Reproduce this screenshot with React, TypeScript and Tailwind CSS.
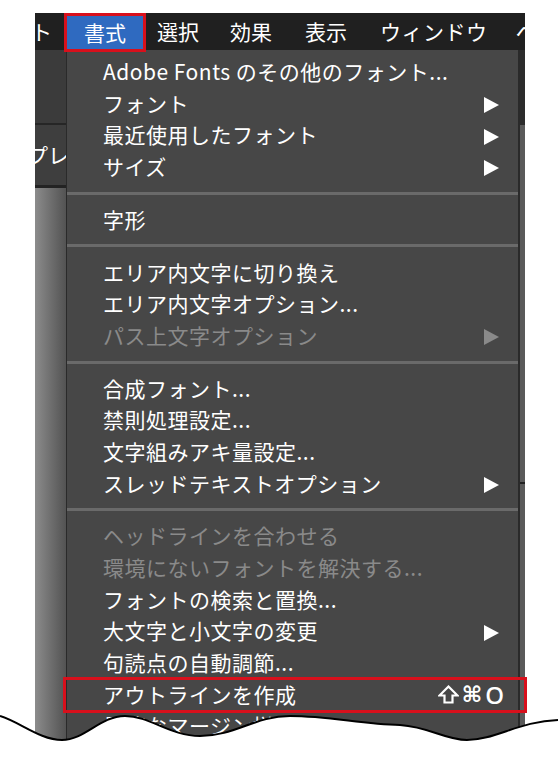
import React from "react";

type Item = {
  label: string;
  arrow?: boolean;
  disabled?: boolean;
  shortcut?: boolean;
  marked?: boolean;
};

const groups: Item[][] = [
  [
    { label: "Adobe Fonts のその他のフォント..." },
    { label: "フォント", arrow: true },
    { label: "最近使用したフォント", arrow: true },
    { label: "サイズ", arrow: true },
  ],
  [{ label: "字形" }],
  [
    { label: "エリア内文字に切り換え" },
    { label: "エリア内文字オプション..." },
    { label: "パス上文字オプション", arrow: true, disabled: true },
  ],
  [
    { label: "合成フォント..." },
    { label: "禁則処理設定..." },
    { label: "文字組みアキ量設定..." },
    { label: "スレッドテキストオプション", arrow: true },
  ],
  [
    { label: "ヘッドラインを合わせる", disabled: true },
    { label: "環境にないフォントを解決する...", disabled: true },
    { label: "フォントの検索と置換..." },
    { label: "大文字と小文字の変更", arrow: true },
    { label: "句読点の自動調節..." },
    { label: "アウトラインを作成", shortcut: true, marked: true },
    { label: "最適なマージン揃え" },
  ],
];

function Arrow() {
  return (
    <svg width="16" height="16" viewBox="0 0 16 16" className="mt-[3px]">
      <polygon points="1,0 16,8 1,16" fill="currentColor" />
    </svg>
  );
}

// shift key symbol
function ShiftIcon() {
  return (
    <svg width="21" height="19" viewBox="0 0 21 19">
      <polygon
        points="10.5,1.5 19.5,10.5 14.5,10.5 14.5,17.5 6.5,17.5 6.5,10.5 1.5,10.5"
        fill="none"
        stroke="white"
        strokeWidth="2.2"
        strokeLinejoin="miter"
      />
    </svg>
  );
}

function Row({ item }: { item: Item }) {
  return (
    <div
      className={
        "relative flex h-[31.7px] items-center justify-between pl-[36px] pr-[19px] " +
        (item.disabled ? "text-[#8a8a8a]" : "text-white")
      }
    >
      <span className="tracking-[0.5px]">{item.label}</span>
      {item.arrow && <Arrow />}
      {item.shortcut && (
        <span className="flex items-center gap-[3px] -mr-[5px]">
          <ShiftIcon />
          <span className="font-['DejaVu_Sans',sans-serif] text-[22px] font-bold leading-none">⌘</span>
          <span className="font-['Noto_Sans',sans-serif] text-[24px] font-medium leading-none">O</span>
        </span>
      )}
      {item.marked && (
        <div className="absolute -left-[4px] -right-[9px] -top-[2px] -bottom-[3px] border-[3px] border-[#d8101c]" />
      )}
    </div>
  );
}

export default function App() {
  return (
    <div className="relative w-[558px] h-[763px] overflow-hidden bg-white font-['Noto_Sans_CJK_JP',sans-serif] text-[21px] font-normal">
      <div className="pt-[13px] pl-[35px] w-[525px]">
        {/* menu bar */}
        <div className="flex h-[37px] items-center bg-[#202020] text-white overflow-x-clip">
          <div className="w-[29px] shrink-0 overflow-hidden">
            <span className="block -ml-[4px]">ト</span>
          </div>
          <div className="relative z-10 self-start flex h-[39px] w-[82px] shrink-0 items-center justify-center border-[3px] border-[#d8101c] bg-[#2f6ac0]">
            書式
          </div>
          <span className="ml-[11px] shrink-0">選択</span>
          <span className="ml-[31px] shrink-0">効果</span>
          <span className="ml-[33px] shrink-0">表示</span>
          <span className="ml-[33px] shrink-0 tracking-[0.5px]">ウィンドウ</span>
          <span className="ml-[28px] shrink-0">ヘルプ</span>
        </div>

        <div className="flex">
          {/* left panel */}
          <div className="flex w-[31px] flex-col">
            <div className="h-[73px] bg-[#3b3b3b]" />
            <div className="h-[2px] bg-[#262626]" />
            <div className="flex h-[60px] items-center overflow-hidden bg-[#3e3e3e] text-white">
              <span className="-ml-[8px] whitespace-nowrap">プレ</span>
            </div>
            <div className="h-[3px] bg-[#232323]" />
            <div className="flex-1 bg-gradient-to-r from-[#8c8c8c] to-[#535353]" />
          </div>

          {/* dropdown */}
          <div className="w-[452px] border-l border-[#2a2a2a] bg-[#474747] pb-[40px]">
            {groups.map((g, i) => (
              <div key={i}>
                {i > 0 && <div className="h-[3px] bg-[#6a6a6a]" />}
                <div className={i === 0 ? "pt-[6px] pb-[9px]" : "py-[9px]"}>
                  {g.map((item) => (
                    <Row key={item.label} item={item} />
                  ))}
                </div>
              </div>
            ))}
          </div>

          {/* right strip */}
          <div className="flex w-[7px] flex-col border-l-2 border-[#2a2a2a]">
            <div className="h-[75px] bg-[#2c2c2c]" />
            <div className="h-[357px] bg-[#5a5a5a]" />
            <div className="h-[2px] bg-[#222]" />
            <div className="flex-1 bg-[#5a5a5a]" />
          </div>
        </div>
      </div>

      {/* torn edge */}
      <svg
        className="absolute left-0 top-[700px] z-20"
        width="558"
        height="63"
        viewBox="0 700 558 63"
      >
        <path
          d="M0,716 C20,722 40,740 62,740 C85,740 100,716 125,716 C150,716 170,736 200,736 C235,736 255,716 290,716 C330,716 360,724 400,725 C430,727 445,740 467,740 C495,740 520,721 558,720 L558,763 L0,763 Z"
          fill="white"
        />
        <path
          d="M0,716 C20,722 40,740 62,740 C85,740 100,716 125,716 C150,716 170,736 200,736 C235,736 255,716 290,716 C330,716 360,724 400,725 C430,727 445,740 467,740 C495,740 520,721 558,720"
          fill="none"
          stroke="black"
          strokeWidth="2"
        />
      </svg>
    </div>
  );
}
